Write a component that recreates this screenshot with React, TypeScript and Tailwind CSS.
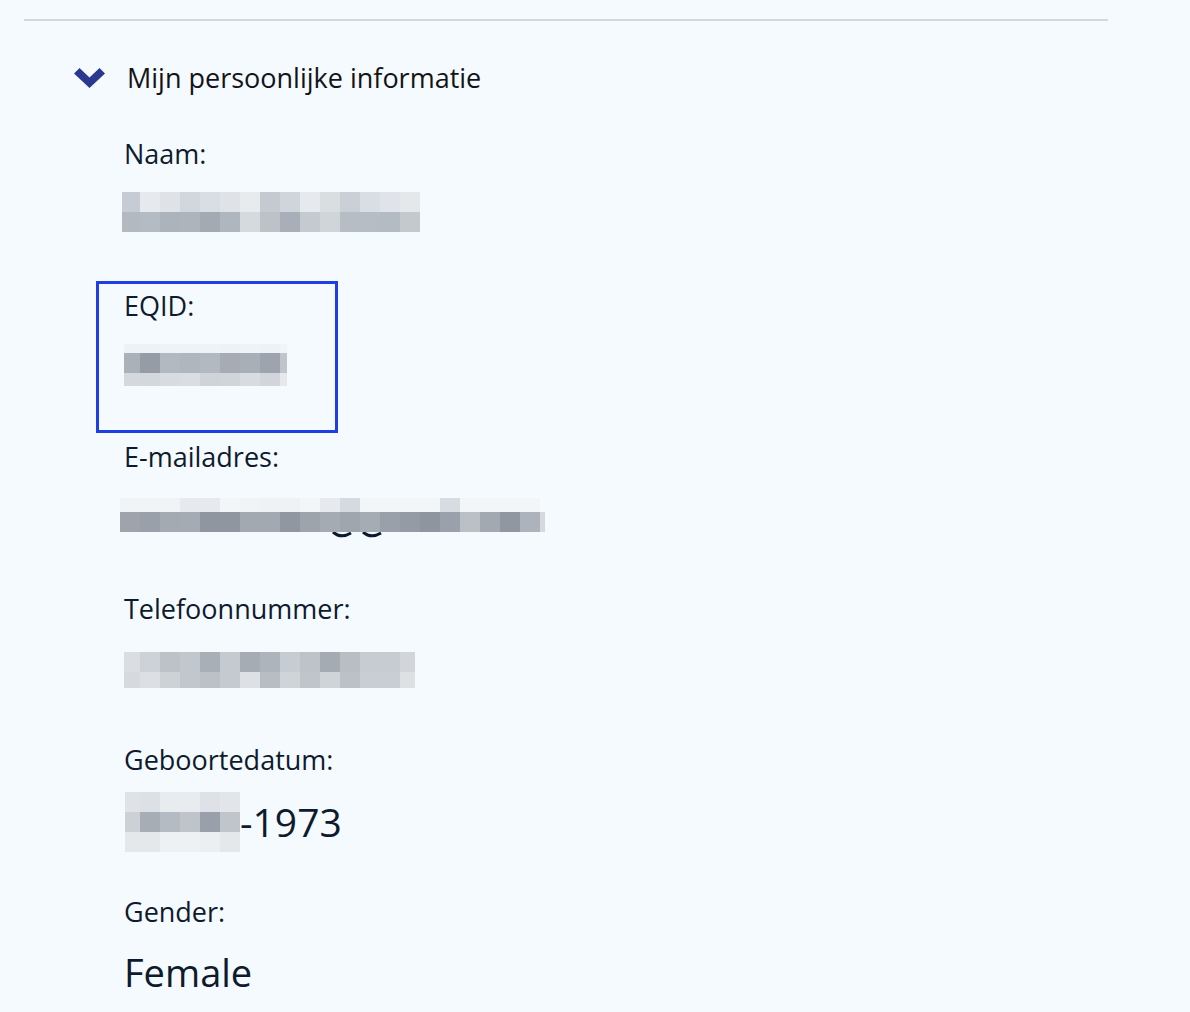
import React from "react";

type Row = { h: number; c: string[] };

function Mosaic({ widths, rows }: { widths: number[]; rows: Row[] }) {
  return (
    <div className="flex flex-col">
      {rows.map((r, i) => (
        <div key={i} className="flex" style={{ height: r.h }}>
          {widths.map((w, j) => (
            <div key={j} style={{ width: w, height: r.h, background: r.c[j] }} />
          ))}
        </div>
      ))}
    </div>
  );
}

const w20 = (n: number) => Array.from({ length: n }, () => 20);

function Label({ children }: { children: React.ReactNode }) {
  return <div className="pt-[9px] text-[27px] leading-[32px] text-[#0e1a2d]">{children}</div>;
}

export default function App() {
  return (
    <div
      className="min-h-[1012px] w-[1190px] bg-[#f5faff] pt-[19px]"
      style={{ fontFamily: '"Open Sans", "Noto Sans", sans-serif' }}
    >
      <div className="ml-[24px] w-[1084px] border-t-2 border-[#d3d8dd]">
        {/* header */}
        <div className="flex h-[108px] items-center pt-[6px] pl-[50px]">
          <svg width="31" height="20" viewBox="0 0 31 20" className="mr-[22px]">
            <path d="M0 5.5 L5.5 0 L15.5 9.5 L25.5 0 L31 5.5 L15.5 20 Z" fill="#2a3890" />
          </svg>
          <span className="text-[27px] leading-[32px] text-[#121418]">Mijn persoonlijke informatie</span>
        </div>

        <div className="pl-[100px]">
          {/* Naam */}
          <div className="h-[151.5px]">
            <Label>Naam:</Label>
            <div className="ml-[-2px] mt-[22px]">
              <Mosaic
                widths={[18, ...w20(14)]}
                rows={[
                  {
                    h: 20,
                    c: ["#c5ccd3", "#e6e9ed", "#dfe3e8", "#d2d7dd", "#d9dee4", "#dfe3e8", "#e8ebee", "#c5cad0", "#d0d5dc", "#e6e9ee", "#d9dfe0", "#cad0d6", "#d9dee4", "#e0e4ea", "#e5e8eb"],
                  },
                  {
                    h: 20,
                    c: ["#b3b9c0", "#b5bbc2", "#adb3bb", "#aeb4bb", "#a4aab3", "#b0b6be", "#d5dadf", "#bcc2c8", "#a9afb8", "#c4cad0", "#d0d5da", "#b7bdc4", "#b7bdc4", "#b5bbc2", "#c4c9ce"],
                  },
                ]}
              />
            </div>
          </div>

          {/* EQID */}
          <div className="relative h-[151.5px]">
            <Label>EQID:</Label>
            <div className="mt-[22px]">
              <Mosaic
                widths={[16, ...w20(7), 7]}
                rows={[
                  { h: 9, c: ["#eef2f5", "#eef2f5", "#f0f3f6", "#f0f3f6", "#f0f3f6", "#eff2f5", "#f0f3f6", "#eef2f5", "#f2f5f8"] },
                  { h: 20, c: ["#aab1b8", "#959ca5", "#b3b9c0", "#b0b6bd", "#b3b9c0", "#a7acb4", "#a9afb6", "#9ea4ad", "#c0c5cb"] },
                  { h: 13, c: ["#d5d9de", "#d3d8dd", "#d8dce1", "#dadee3", "#cfd4d9", "#d0d5da", "#d8dce1", "#d2d6dc", "#e6e9ec"] },
                ]}
              />
            </div>
            <div className="absolute left-[-28px] top-0 h-[152px] w-[242px] border-[3px] border-[#1e3fe3]" />
          </div>

          {/* E-mail */}
          <div className="h-[151.5px]">
            <Label>E-mailadres:</Label>
            <div className="ml-[-4px] mt-[25px]">
              <Mosaic
                widths={[...w20(21), 5]}
                rows={[
                  {
                    h: 14,
                    c: ["#f1f4f7", "#f1f4f7", "#f1f4f7", "#e6e9ed", "#e6e9ed", "#f3f6f9", "#f1f4f7", "#eff2f5", "#eff2f5", "#f3f6f9", "#e6e9ed", "#d5dae0", "#f3f6f9", "#f3f6f9", "#f3f6f9", "#f3f6f9", "#d7dce2", "#f3f6f9", "#f3f6f9", "#f3f6f9", "#f3f6f9", "#f5faff"],
                  },
                  {
                    h: 20,
                    c: ["#9ea3ac", "#9aa0a9", "#a4aab2", "#a5abb3", "#8f969f", "#8f969f", "#a3a9b1", "#a3a9b1", "#9097a0", "#9ea4ac", "#a5abb3", "#a0a6ae", "#a6acb4", "#9aa0a9", "#959ba4", "#8e959e", "#9ba1aa", "#bbc0c6", "#a3a9b1", "#9097a0", "#adb3ba", "#d5d9dd"],
                  },
                ]}
              />
              <svg width="60" height="8" viewBox="0 0 60 8" className="ml-[211px]">
                <path d="M2 0 Q10 7 20 1" stroke="#0e1a2d" strokeWidth="3" fill="none" />
                <path d="M32 0 Q40 7 50 1" stroke="#0e1a2d" strokeWidth="3" fill="none" />
              </svg>
            </div>
          </div>

          {/* Telefoon */}
          <div className="h-[151.5px]">
            <Label>Telefoonnummer:</Label>
            <div className="mt-[27px]">
              <Mosaic
                widths={[16, ...w20(13), 15]}
                rows={[
                  {
                    h: 20,
                    c: ["#dadee3", "#cdd2d8", "#bcc2c8", "#c2c7cd", "#a9afb7", "#c5cad0", "#a6acb4", "#aeb4bb", "#c7ccd2", "#bec3c9", "#a5abb3", "#b9bec5", "#c7ccd2", "#c7ccd2", "#d2d6db"],
                  },
                  {
                    h: 16,
                    c: ["#d6dadf", "#dce0e4", "#cdd2d7", "#c2c7cd", "#bcc1c8", "#c5cad0", "#dde1e5", "#b8bdc4", "#cfd4d9", "#c0c5cb", "#cfd4d9", "#bcc1c7", "#c9ced4", "#c9ced4", "#dde1e4"],
                  },
                ]}
              />
            </div>
          </div>

          {/* Geboortedatum */}
          <div className="h-[151.5px]">
            <Label>Geboortedatum:</Label>
            <div className="mt-[16px] flex items-start pl-[1px]">
              <Mosaic
                widths={[15, ...w20(5)]}
                rows={[
                  { h: 20, c: ["#dfe3e7", "#dde1e6", "#e9ecef", "#e9ecef", "#dee2e8", "#e2e6ea"] },
                  { h: 20, c: ["#ccd1d6", "#a7adb5", "#b5bbc2", "#bfc4ca", "#9aa0a9", "#c0c5cb"] },
                  { h: 20, c: ["#e5e8eb", "#e5e8eb", "#eef1f4", "#eef1f4", "#eceff2", "#e5e8eb"] },
                ]}
              />
              <span className="text-[39px] leading-[60px] text-[#0e1a2d]">-1973</span>
            </div>
          </div>

          {/* Gender */}
          <div className="h-[122px]">
            <Label>Gender:</Label>
            <div className="mt-[14px] text-[38px] leading-[60px] text-[#0e1a2d]">Female</div>
          </div>
        </div>
      </div>
    </div>
  );
}
